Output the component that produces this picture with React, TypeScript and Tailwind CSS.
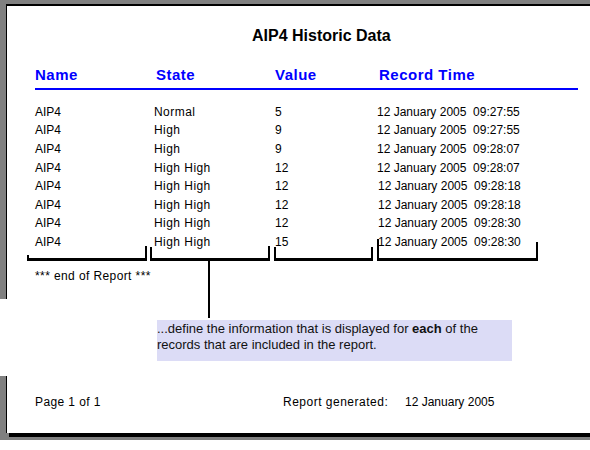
const rows = [
  { name: 'AIP4', state: 'Normal', value: '5', time: '12 January 2005  09:27:55', shift: false },
  { name: 'AIP4', state: 'High', value: '9', time: '12 January 2005  09:27:55', shift: false },
  { name: 'AIP4', state: 'High', value: '9', time: '12 January 2005  09:28:07', shift: false },
  { name: 'AIP4', state: 'High High', value: '12', time: '12 January 2005  09:28:07', shift: false },
  { name: 'AIP4', state: 'High High', value: '12', time: '12 January 2005  09:28:18', shift: true },
  { name: 'AIP4', state: 'High High', value: '12', time: '12 January 2005  09:28:18', shift: true },
  { name: 'AIP4', state: 'High High', value: '12', time: '12 January 2005  09:28:30', shift: true },
  { name: 'AIP4', state: 'High High', value: '15', time: '12 January 2005  09:28:30', shift: true },
]

// bracket spans (screen x) and tick heights, bottoms all at y=261
const brackets = [
  { ml: 'ml-[20px]', w: 'w-[120px]', left: 'h-[6px]', right: 'h-[15px]' },
  { ml: 'ml-[3px]', w: 'w-[120px]', left: 'h-[14px]', right: 'h-[15px]' },
  { ml: 'ml-[4px]', w: 'w-[99px]', left: 'h-[14px]', right: 'h-[14px]' },
  { ml: 'ml-[4px]', w: 'w-[161px]', left: 'h-[22px]', right: 'h-[19px]' },
]

export default function App() {
  return (
    <div className="relative w-[590px] h-[450px] overflow-hidden bg-white font-['Liberation_Sans',Arial,sans-serif] text-black">
      {/* top part of the report page */}
      <div className="h-[299px] bg-[#808080] pt-[4px] pl-[6px]">
        <div className="h-full bg-white border-t-2 border-l border-black flex flex-col">
          <div className="mt-[21.5px] ml-[245px] text-[16px] leading-[16px] font-bold whitespace-nowrap">AIP4 Historic Data</div>

          {/* column headers */}
          <div className="mt-[23.8px] grid grid-cols-[120px_120px_102px_1fr] pl-[28px] text-[15px] leading-[15px] font-bold tracking-[0.5px] text-[#0000ff] whitespace-nowrap">
            <span>Name</span>
            <span className="ml-px">State</span>
            <span>Value</span>
            <span className="ml-[2px]">Record Time</span>
          </div>
          <div className="mt-[5.7px] ml-[28px] w-[543px] h-[2px] bg-[#0000ff]" />

          {/* records */}
          <div className="mt-[12.8px] flex flex-col">
            {rows.map((r, i) => (
              <div key={i} className="grid grid-cols-[120px_120px_102px_1fr] pl-[28px] h-[18.6px] text-[12px] leading-[18.6px] whitespace-pre">
                <span>{r.name}</span>
                <span className="-ml-px tracking-[0.45px]">{r.state}</span>
                <span>{r.value}</span>
                <span className={r.shift ? 'ml-px' : ''}>{r.time}</span>
              </div>
            ))}
          </div>

          {/* brackets */}
          <div className="-mt-[13.6px] h-[23px] flex items-end">
            {brackets.map((b, i) => (
              <div key={i} className={`${b.ml} ${b.w} flex items-end`}>
                <div className={`w-[2px] ${b.left} bg-black`} />
                <div className="flex-1 h-[3px] bg-black" />
                <div className={`w-[2px] ${b.right} bg-black`} />
              </div>
            ))}
          </div>

          <div className="mt-[8.5px] ml-[28px] text-[12px] leading-[14px] tracking-[0.4px] whitespace-nowrap">*** end of Report ***</div>
        </div>
      </div>

      {/* annotation */}
      <div className="h-[77px] pt-[21px] pl-[157px]">
        <div className="w-[355px] h-[41px] pt-px bg-[#dcdcf6] text-[13px] leading-[16px] text-[#111]">
          ...define the information that is displayed for <b>each</b> of the records that are included in the report.
        </div>
      </div>

      {/* bottom part of the report page */}
      <div className="bg-[#808080] pl-[6px] pb-[3px]">
        <div className="h-[57px] pt-[18.8px] bg-white border-l border-black">
          <div className="pl-[28px] flex text-[12px] leading-[14px] whitespace-nowrap">
            <span className="w-[248px] tracking-[0.4px]">Page 1 of 1</span>
            <span className="w-[122px] tracking-[0.5px]">Report generated:</span>
            <span>12 January 2005</span>
          </div>
        </div>
        <div className="flex">
          <div className="w-[3px]" />
          <div className="flex-1 h-[4px] bg-black" />
        </div>
      </div>

      {/* connector from the state bracket to the note */}
      <div className="absolute left-[208px] top-[261px] w-[2px] h-[57px] bg-black" />
    </div>
  )
}
